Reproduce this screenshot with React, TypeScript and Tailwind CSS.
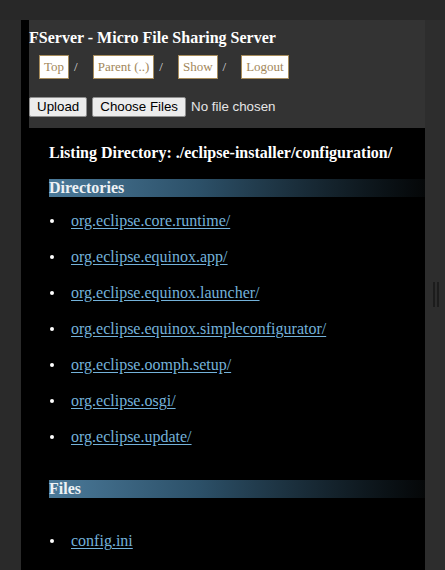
const dirs = [
  "org.eclipse.core.runtime/",
  "org.eclipse.equinox.app/",
  "org.eclipse.equinox.launcher/",
  "org.eclipse.equinox.simpleconfigurator/",
  "org.eclipse.oomph.setup/",
  "org.eclipse.osgi/",
  "org.eclipse.update/",
];

const files = ["config.ini"];

const navLinks = ["Top", "Parent (..)", "Show", "Logout"];

const serif = "font-['Liberation_Serif',_'Times_New_Roman',_serif]";
const sans = "font-['Liberation_Sans',_Arial,_sans-serif]";

function SectionBar({ label }: { label: string }) {
  return (
    <div className="h-[18px] bg-linear-to-r from-[#4b7a9a] via-[#2c5068] via-40% to-[#050708] text-[16px] font-bold leading-[18px] text-[#eef2f5]">
      {label}
    </div>
  );
}

function Entry({ name }: { name: string }) {
  return (
    <li className="flex h-[18px] items-center">
      <span className="ml-[1px] h-[4px] w-[4px] rounded-full bg-white" />
      <a href="#" className="ml-[17px] text-[16px] leading-[18px] text-[#74b2da] underline underline-offset-2">
        {name}
      </a>
    </li>
  );
}

export default function App() {
  return (
    <div className={`flex h-[570px] w-[445px] overflow-hidden bg-[#282828] pt-[20px] ${serif}`}>
      <div className="w-[21px] shrink-0 bg-[#2a2a2a]" />

      <div className="flex w-[404px] shrink-0 flex-col">
        <header className="h-[108px] border-l-[8px] border-black bg-[#333333] pt-[9px]">
          <h1 className="text-[16px] font-bold leading-[18px] text-white">
            FServer - Micro File Sharing Server
          </h1>

          <nav className="mt-[8px] flex items-center pl-[10px]">
            {navLinks.map((link, i) => (
              <div key={link} className="flex items-center">
                <a
                  href="#"
                  className={`border border-[#a88d5c] bg-white px-[4px] py-[3px] text-[13px] leading-[16px] text-[#a2875a] ${i > 0 ? "ml-[15px]" : ""}`}
                >
                  {link}
                </a>
                {i < navLinks.length - 1 && (
                  <span className="ml-[5px] text-[13px] leading-[16px] text-[#dddddd]">/</span>
                )}
              </div>
            ))}
          </nav>

          <div className={`mt-[18px] flex items-center ${sans} text-[13.33px] leading-[16px]`}>
            <button className="h-[20px] rounded-[2px] border border-[#8f8f8f] bg-[#ececec] px-[7px] text-black">
              Upload
            </button>
            <button className="ml-[5px] h-[20px] rounded-[2px] border border-[#8f8f8f] bg-[#ececec] px-[7px] text-black">
              Choose Files
            </button>
            <span className="ml-[5px] text-[#e6e6e6]">No file chosen</span>
          </div>
        </header>

        <main className="flex-1 bg-black pl-[28px] pt-[16px]">
          <h2 className="text-[16px] font-bold leading-[18px] text-white">
            Listing Directory: ./eclipse-installer/configuration/
          </h2>

          <div className="mt-[17px]">
            <SectionBar label="Directories" />
            <ul className="mt-[15px] flex flex-col gap-[18px]">
              {dirs.map((d) => (
                <Entry key={d} name={d} />
              ))}
            </ul>
          </div>

          <div className="mt-[34px]">
            <SectionBar label="Files" />
            <ul className="mt-[34px] flex flex-col gap-[18px]">
              {files.map((f) => (
                <Entry key={f} name={f} />
              ))}
            </ul>
          </div>
        </main>
      </div>

      <div className="flex w-[20px] shrink-0 flex-col items-center bg-[#2d2d2d]">
        <div className="ml-[1px] mt-[262px] flex gap-[2px]">
          <span className="h-[25px] w-[2px] bg-[#1c1c1c]" />
          <span className="h-[25px] w-[2px] bg-[#1c1c1c]" />
        </div>
      </div>
    </div>
  );
}
